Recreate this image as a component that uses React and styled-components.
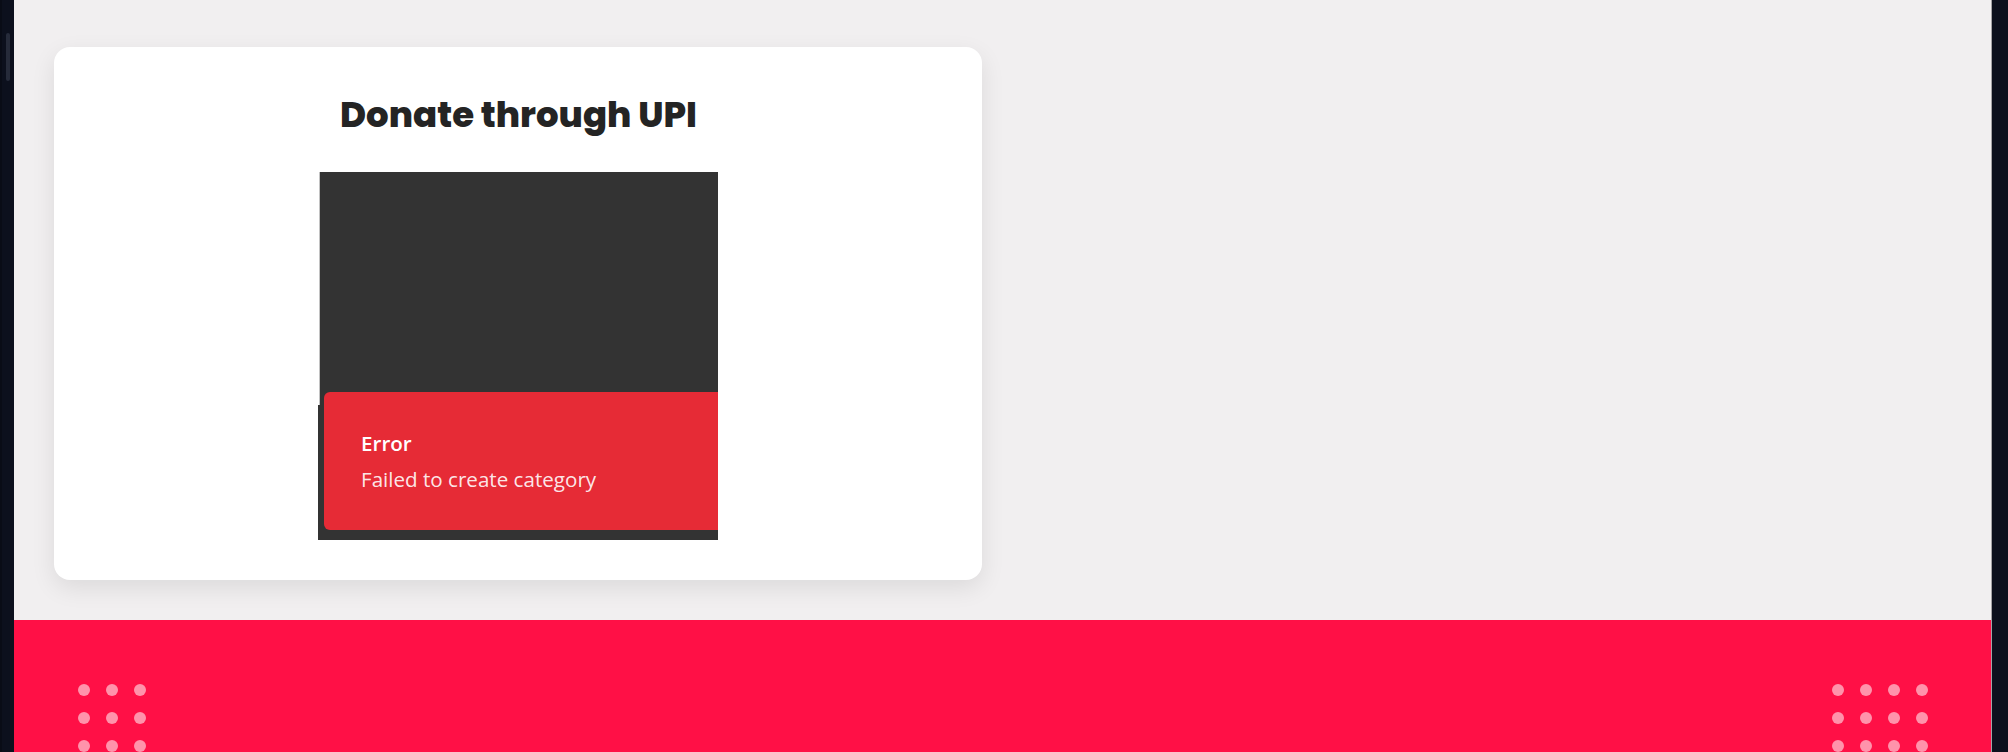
import React from 'react';
import styled, { createGlobalStyle } from 'styled-components';

const GlobalStyle = createGlobalStyle`
  html, body {
    margin: 0;
    padding: 0;
    background: #0c101d;
  }
  * { box-sizing: border-box; }
`;

const Frame = styled.div`
  display: flex;
  height: 100vh;
  overflow: hidden;
`;

const Rail = styled.div`
  flex: 0 0 ${({ $w }) => $w}px;
  background: #0c101d;
  border-left: ${({ $edge }) => ($edge ? '2px solid #090c16' : 'none')};
  padding-top: 33px;
`;

const ScrollThumb = styled.div`
  width: 4px;
  height: 48px;
  margin-left: 4px;
  border-radius: 2px;
  background: #262b3a;
`;

const Main = styled.main`
  flex: 1;
  display: flex;
  flex-direction: column;
  background: #f1eff0;
  border-right: 1px solid #a4a3a6;
`;

const Section = styled.section`
  padding: 47px 40px 40px;
`;

const Card = styled.div`
  width: 928px;
  background: #fff;
  border-radius: 16px;
  box-shadow: 0 8px 24px rgba(0, 0, 0, 0.09);
  padding: 47px 0 40px;
  display: flex;
  flex-direction: column;
  align-items: center;
`;

const Title = styled.h2`
  margin: 0 0 36px;
  font-family: 'Poppins', 'Inter', sans-serif;
  font-weight: 800;
  font-size: 35.5px;
  line-height: 42px;
  color: #242424;
  padding-left: 1px;
`;

const QrFrame = styled.div`
  position: relative;
  width: 400px;
  height: 368px;
  background: #333333;
  overflow: hidden;
  display: flex;
  flex-direction: column;
  justify-content: flex-end;
  padding: 0 0 10px 6px;

  &::before {
    content: '';
    position: absolute;
    left: 0;
    top: 0;
    width: 2px;
    height: 233px;
    background: linear-gradient(to right, #ffffff 50%, #c2c2c2 50%);
  }
`;

const Toast = styled.div`
  width: 430px;
  flex-shrink: 0;
  background: #e62b36;
  border-radius: 6px;
  padding: 37px;
  display: flex;
  flex-direction: column;
  gap: 8px;
  font-family: 'Open Sans', sans-serif;
  font-size: 20.6px;
  line-height: 28px;
  color: #fff;
`;

const ToastTitle = styled.div`
  font-weight: 600;
`;

const ToastText = styled.div`
  color: rgba(255, 255, 255, 0.9);
`;

const Footer = styled.footer`
  flex: 1;
  background: #ff1046;
  padding: 64px 63px 0 64px;
  display: flex;
  justify-content: space-between;
  align-items: flex-start;
`;

const DotGrid = styled.div`
  display: grid;
  grid-template-columns: repeat(${({ $cols }) => $cols}, 12px);
  gap: 16px;
`;

const Dot = styled.span`
  width: 12px;
  height: 12px;
  border-radius: 50%;
  background: rgba(255, 255, 255, 0.55);
`;

const Dots = ({ cols, rows }) => (
  <DotGrid $cols={cols}>
    {Array.from({ length: cols * rows }).map((_, i) => (
      <Dot key={i} />
    ))}
  </DotGrid>
);

const App = () => (
  <>
    <GlobalStyle />
    <Frame>
      <Rail $w={14} $edge>
        <ScrollThumb />
      </Rail>
      <Main>
        <Section>
          <Card>
            <Title>Donate through UPI</Title>
            <QrFrame>
              <Toast>
                <ToastTitle>Error</ToastTitle>
                <ToastText>Failed to create category</ToastText>
              </Toast>
            </QrFrame>
          </Card>
        </Section>
        <Footer>
          <Dots cols={3} rows={4} />
          <Dots cols={4} rows={4} />
        </Footer>
      </Main>
      <Rail $w={16} />
    </Frame>
  </>
);

export default App;
